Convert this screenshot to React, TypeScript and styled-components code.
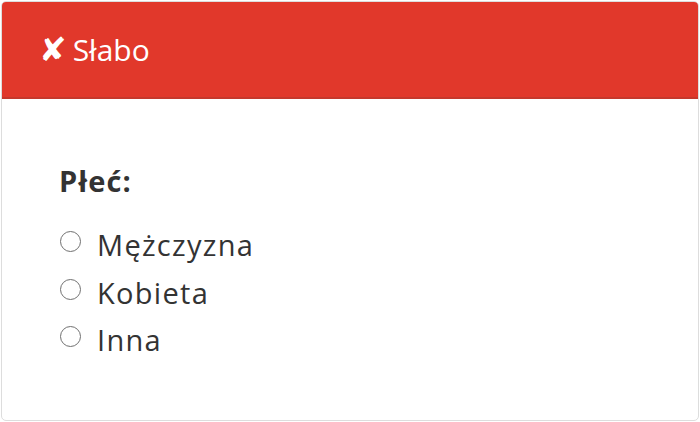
import React from 'react';
import styled, { createGlobalStyle } from 'styled-components';

const GlobalStyle = createGlobalStyle`
  html, body {
    margin: 0;
    padding: 0;
    background: #ffffff;
  }
  body {
    font-family: "Open Sans", "Liberation Sans", sans-serif;
    color: #333333;
  }
`;

const genderOptions = ['Mężczyzna', 'Kobieta', 'Inna'];

const Page = styled.div`
  width: 700px;
  height: 422px;
  padding: 1px;
  box-sizing: border-box;
`;

const Card = styled.section`
  height: 100%;
  box-sizing: border-box;
  border: 1px solid #dddddd;
  border-radius: 5px;
  overflow: hidden;
  background: #ffffff;
`;

const Header = styled.header`
  display: flex;
  align-items: center;
  gap: 6px;
  height: 95px;
  padding: 0 0 0 37px;
  background: #e1382b;
  border-bottom: 2px solid #c5382c;
  color: #ffffff;
  font-size: 30px;
`;

const CrossMark = styled.span`
  font-family: "DejaVu Sans", sans-serif;
  font-weight: bold;
  font-size: 33px;
  line-height: 1;
`;

const Body = styled.div`
  padding: 64px 0 0 58px;
`;

const Label = styled.div`
  font-weight: bold;
  font-size: 29px;
  line-height: 35px;
  letter-spacing: 1.1px;
  margin: 0 0 23px -1px;
`;

const OptionList = styled.div`
  display: flex;
  flex-direction: column;
`;

const Option = styled.label`
  display: flex;
  align-items: center;
  gap: 16px;
  height: 47.5px;
  line-height: 47.5px;
  font-size: 29px;
  letter-spacing: 1.3px;
`;

const Radio = styled.span`
  box-sizing: border-box;
  width: 21px;
  height: 21px;
  border: 1.8px solid #707070;
  border-radius: 50%;
  flex: 0 0 21px;
  margin-bottom: 6px;
`;

const App: React.FC = () => {
  return (
    <Page>
      <GlobalStyle />
      <Card>
        <Header>
          <CrossMark>✘</CrossMark>
          <span>Słabo</span>
        </Header>
        <Body>
          <Label>Płeć:</Label>
          <OptionList>
            {genderOptions.map((option) => (
              <Option key={option}>
                <Radio />
                {option}
              </Option>
            ))}
          </OptionList>
        </Body>
      </Card>
    </Page>
  );
};

export default App;
